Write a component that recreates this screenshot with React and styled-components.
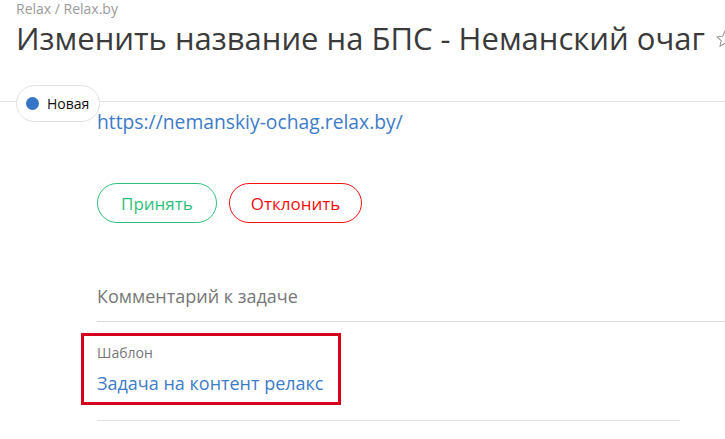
import React from "react";
import styled, { createGlobalStyle } from "styled-components";

const GlobalStyle = createGlobalStyle`
  html, body {
    margin: 0;
    padding: 0;
    background: #fff;
    overflow: hidden;
  }
  body {
    font-family: "Open Sans", "Segoe UI", Arial, sans-serif;
    color: #333;
  }
`;

const Page = styled.div`
  position: relative;
  width: 725px;
  height: 439px;
  overflow: hidden;
`;

const Header = styled.header`
  height: 102px;
  padding: 0 16px;
  border-bottom: 1px solid #e3e3e3;
  box-sizing: border-box;
  overflow: hidden;
`;

const Breadcrumb = styled.div`
  font-size: 14px;
  line-height: 18px;
  color: #9a9a9a;
`;

const TitleRow = styled.div`
  display: flex;
  align-items: center;
  white-space: nowrap;
`;

const Title = styled.h1`
  margin: 0;
  font-size: 31px;
  font-weight: 400;
  line-height: 40px;
  color: #3a3a3a;
`;

const Star = styled.svg`
  flex: none;
  margin-left: 10px;
  margin-top: 2px;
`;

const StatusPill = styled.div`
  position: absolute;
  left: 16px;
  top: 85px;
  height: 37px;
  box-sizing: border-box;
  display: flex;
  align-items: center;
  gap: 8px;
  padding: 0 10px 0 9px;
  background: #fff;
  border: 1px solid #e2e2e2;
  border-radius: 19px;
  font-size: 14px;
  color: #111;
`;

const Dot = styled.span`
  width: 13px;
  height: 13px;
  border-radius: 50%;
  background: #3574c6;
`;

const Content = styled.main`
  padding-left: 97px;
`;

const Link = styled.a`
  display: block;
  margin-top: 8px;
  font-size: 19.3px;
  line-height: 24px;
  color: #3d7cc9;
  text-decoration: none;
`;

const Actions = styled.div`
  display: flex;
  gap: 12px;
  margin-top: 49px;
`;

const ActionButton = styled.button`
  height: 40px;
  padding: 0 ${({ $pad }) => $pad}px;
  border-radius: 20px;
  background: #fff;
  border: 1px solid ${({ $color }) => $color};
  color: ${({ $color }) => $color};
  font-family: inherit;
  font-size: 17px;
  cursor: pointer;
`;

const SectionTitle = styled.div`
  margin-top: 61px;
  padding-bottom: 13px;
  font-size: 18px;
  line-height: 24px;
  color: #777;
  border-bottom: 1px solid #dedede;
`;

const Field = styled.div`
  width: 260px;
  box-sizing: border-box;
  margin: 11px 0 0 -16px;
  padding: 7px 13px;
  border: 3px solid #d7001c;
`;

const FieldLabel = styled.div`
  font-size: 14px;
  line-height: 20px;
  color: #777;
`;

const FieldValue = styled.a`
  display: block;
  margin-top: 8px;
  font-size: 18px;
  line-height: 24px;
  color: #3d7cc9;
  text-decoration: none;
`;

const Divider = styled.div`
  width: 583px;
  margin-top: 15px;
  border-top: 1px solid #dedede;
`;

export default function App() {
  return (
    <>
      <GlobalStyle />
      <Page>
        <Header>
          <Breadcrumb>Relax / Relax.by</Breadcrumb>
          <TitleRow>
            <Title>Изменить название на БПС - Неманский очаг</Title>
            <Star width="20" height="20" viewBox="0 0 24 24" fill="none" stroke="#999" strokeWidth="1.3">
              <path d="M12 2.5l2.9 6.1 6.6.8-4.9 4.6 1.3 6.6L12 17.3l-5.9 3.3 1.3-6.6-4.9-4.6 6.6-.8z" />
            </Star>
          </TitleRow>
        </Header>
        <StatusPill>
          <Dot />
          Новая
        </StatusPill>
        <Content>
          <Link href="#">https://nemanskiy-ochag.relax.by/</Link>
          <Actions>
            <ActionButton $color="#2fbf7c" $pad={23}>Принять</ActionButton>
            <ActionButton $color="#f50f0f" $pad={21}>Отклонить</ActionButton>
          </Actions>
          <SectionTitle>Комментарий к задаче</SectionTitle>
          <Field>
            <FieldLabel>Шаблон</FieldLabel>
            <FieldValue href="#">Задача на контент релакс</FieldValue>
          </Field>
          <Divider />
        </Content>
      </Page>
    </>
  );
}
